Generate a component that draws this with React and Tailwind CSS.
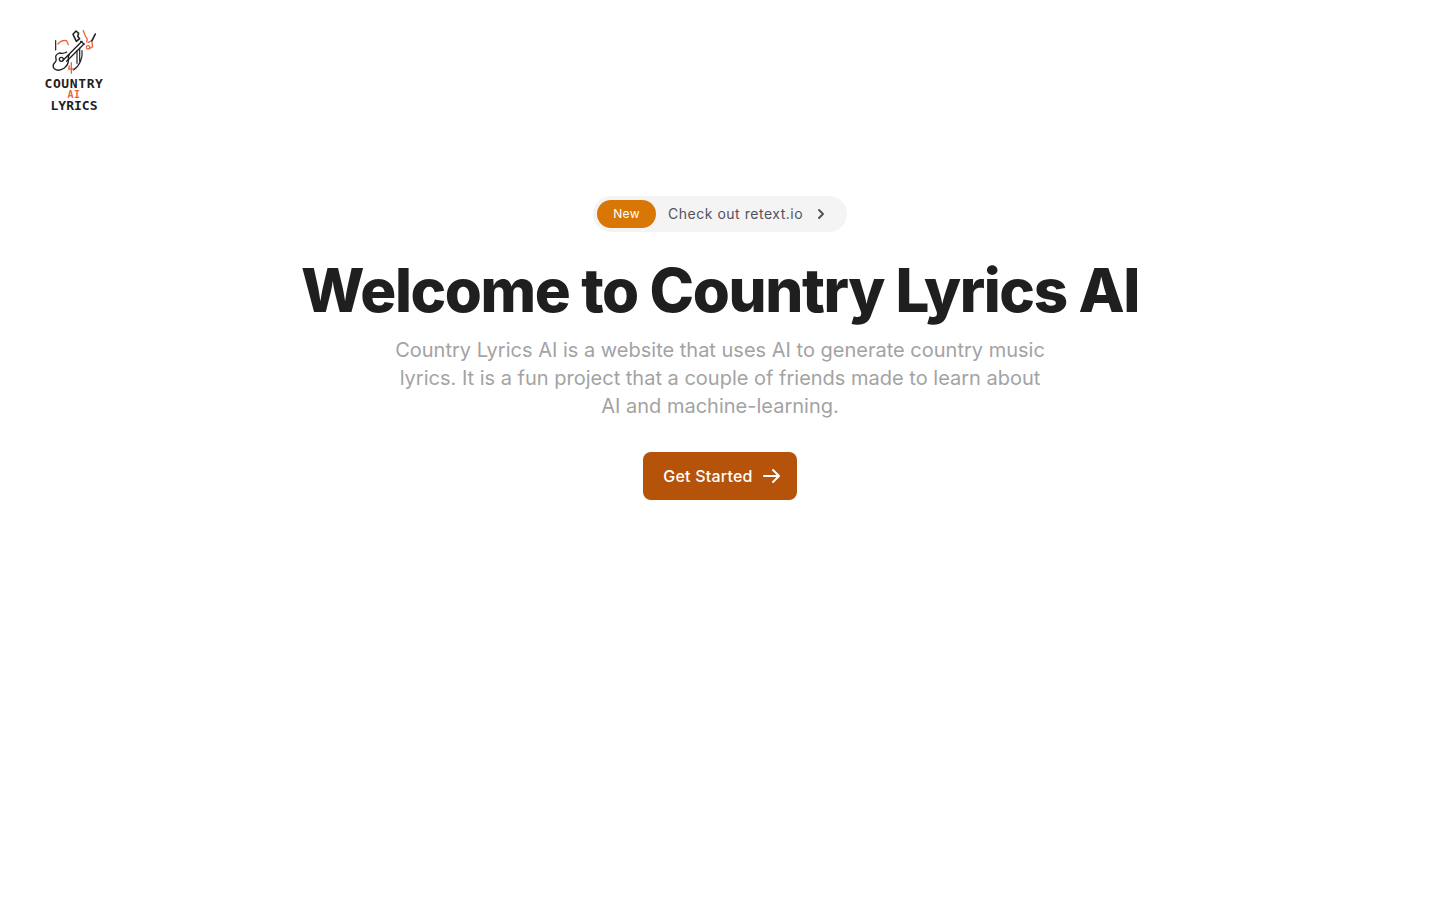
import React from 'react';

const Logo = () => (
  <div className='flex flex-col items-center w-[60px]'>
    {/* drawn in crop coordinates, 3 units to a pixel */}
    <svg width='60' height='45' viewBox='42 30 180 135' fill='none' strokeLinecap='round' strokeLinejoin='round'>
      <path d='M110 96c-6 4-14 5-22 3-8 3-13 9-10 17 1 4 2 6-2 10-7 7-9 14-3 20 8 7 20 5 30-2 9-7 14-18 12-30-1-4 0-7 3-10' stroke='#1f1f24' strokeWidth='4' />
      <circle cx='94' cy='118' r='6' stroke='#1f1f24' strokeWidth='4' />
      <path d='M100 120l56-56M110 124l52-52' stroke='#1f1f24' strokeWidth='4' />
      <path d='M129 43l9-10 8 7-3 9 6 7-10 8z' stroke='#1f1f24' strokeWidth='4.500' />
      <path d='M152 64l10 8' stroke='#1f1f24' strokeWidth='4' />
      <path d='M77 62v28M141 92v38M149 84v40M156 92c3 20-6 45-26 58' stroke='#1f1f24' strokeWidth='3.500' />
      {/* orange details */}
      <path d='M84 72c6-8 16-12 26-10l5 12M124 128v32M118 138l-2 9h14' stroke='#f0643c' strokeWidth='4' />
      <path d='M160 32l6 16 6 10-2 8M178 86l10-6-3-18-10 5' stroke='#f0643c' strokeWidth='4' />
      <circle cx='174' cy='82' r='5' stroke='#f0643c' strokeWidth='4' />
      <path d='M186 62l10-20' stroke='#1f1f24' strokeWidth='5' />
    </svg>
    <p className='mt-[3px] font-["DejaVu_Sans_Mono",monospace] font-bold text-[13px] leading-[12px] tracking-[0.600px] text-[#1f1f24] whitespace-nowrap'>COUNTRY</p>
    <p className='font-["DejaVu_Sans_Mono",monospace] font-bold text-[10px] leading-[10px] tracking-[0.500px] text-[#f0643c]'>AI</p>
    <p className='font-["DejaVu_Sans_Mono",monospace] font-bold text-[13px] leading-[12px] text-[#1f1f24]'>LYRICS</p>
  </div>
);

export default function App() {
  return (
    <div className='min-h-screen bg-white font-["Inter",sans-serif]'>
      <header className='pl-[44px] pt-[30px]'>
        <Logo />
      </header>
      <main className='flex flex-col items-center pt-[84px]'>
        <a className='flex items-center h-9 w-[254px] rounded-full bg-[#f4f4f5] pl-1'>
          <span className='flex items-center justify-center w-[59px] h-7 rounded-full bg-[#d97706] text-white text-xs tracking-[0.300px]'>New</span>
          <span className='ml-3 text-sm tracking-[0.520px] text-[#52525b]'>Check out retext.io</span>
          <svg className='ml-2.5' width='16' height='16' viewBox='0 0 16 16' fill='none' stroke='#52525b' strokeWidth='2' strokeLinecap='round' strokeLinejoin='round'>
            <path d='M6 4l4 4-4 4' />
          </svg>
        </a>
        <h1 className='mt-[28px] text-6xl leading-[60px] font-extrabold tracking-[-1.400px] text-[#1f1f1f]'>Welcome to Country Lyrics AI</h1>
        <p className='mt-4 w-[672px] px-2 text-center text-xl text-[#a3a3a3]'>
          Country Lyrics AI is a website that uses AI to generate country music lyrics. It is a fun project that a couple of friends made to learn about AI and machine-learning.
        </p>
        <button className='mt-8 flex items-center h-12 pl-5 pr-4 gap-2 rounded-lg bg-[#b45309] text-white font-medium tracking-[0.200px]'>
          Get Started
          <svg width='20' height='20' viewBox='0 0 20 20' fill='none' stroke='currentColor' strokeWidth='2' strokeLinecap='round' strokeLinejoin='round'>
            <path d='M3 10h15M12 4l6 6-6 6' />
          </svg>
        </button>
      </main>
    </div>
  );
}
